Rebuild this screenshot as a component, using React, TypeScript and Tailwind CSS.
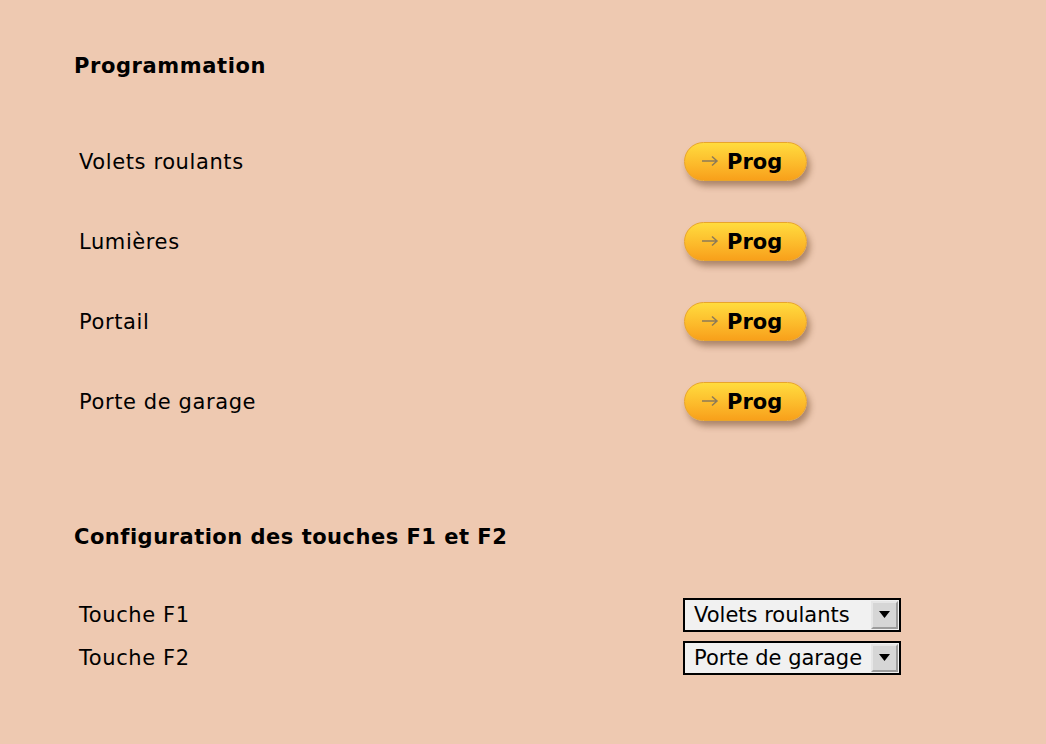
import React from "react";

const font = { fontFamily: "Verdana, 'DejaVu Sans', sans-serif" };

function ProgButton() {
  return (
    <button
      type="button"
      className="flex h-[39px] w-[123px] items-center rounded-full border border-[#e9a52a] bg-gradient-to-b from-[#ffdc3e] to-[#f8a01a] pl-[16px] shadow-[3px_5px_6px_rgba(90,50,20,0.45)]"
    >
      <svg width="18" height="12" viewBox="0 0 18 12" className="mr-[8px]">
        <path d="M1 6 H16 M11 1.5 L16 6 L11 10.5" fill="none" stroke="#8c7a58" strokeWidth="1.5" />
      </svg>
      <span className="pt-[3px] text-[21px] font-bold leading-none text-black">Prog</span>
    </button>
  );
}

function FakeSelect({ value }: { value: string }) {
  return (
    <div className="flex h-[34px] w-[218px] items-stretch border-2 border-black bg-[#f1f1f1]">
      <div className="flex flex-1 items-center pl-[9px] pt-[1px] text-[21px] leading-none text-black">{value}</div>
      <div className="my-[1px] mr-[1px] flex w-[27px] items-center justify-center border-2 border-t-[#e6e6e6] border-l-[#e6e6e6] border-b-[#9c9c9c] border-r-[#9c9c9c] bg-[#d6d6d6]">
        <svg width="11" height="7" viewBox="0 0 11 7">
          <path d="M0 0 H11 L5.5 7 Z" fill="#000" />
        </svg>
      </div>
    </div>
  );
}

export default function App() {
  const rows = ["Volets roulants", "Lumières", "Portail", "Porte de garage"];
  return (
    <div className="min-h-[744px] w-full bg-[#eec9b1] pl-[74px] pt-[52px] text-black" style={font}>
      <div className="flex h-[30px] items-center text-[21px] font-bold tracking-[0.6px]">Programmation</div>

      <div className="mt-[39px]">
        {rows.map((r) => (
          <div key={r} className="flex h-[80px] items-center">
            <div className="w-[610px] pl-[5px] pt-[3px] text-[21px] tracking-[0.6px]">{r}</div>
            <ProgButton />
          </div>
        ))}
      </div>

      <div className="mt-[81px] flex h-[30px] items-center pt-[2px] text-[21px] font-bold tracking-[0.5px]">
        Configuration des touches F1 et F2
      </div>

      <div className="mt-[41px]">
        <div className="flex h-[43px] items-center">
          <div className="w-[609px] pl-[5px] pt-[2px] text-[21px] tracking-[0.6px]">Touche F1</div>
          <FakeSelect value="Volets roulants" />
        </div>
        <div className="flex h-[43px] items-center">
          <div className="w-[609px] pl-[5px] pt-[2px] text-[21px] tracking-[0.6px]">Touche F2</div>
          <FakeSelect value="Porte de garage" />
        </div>
      </div>
    </div>
  );
}
